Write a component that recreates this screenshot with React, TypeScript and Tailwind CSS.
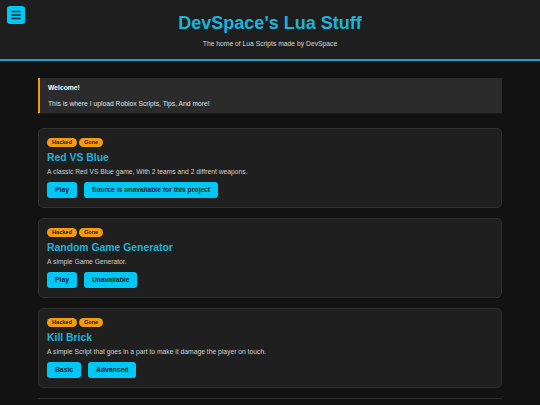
import { Menu } from 'lucide-react'

type Project = {
  title: string
  description: string
  tags: string[]
  actions: string[]
}

const projects: Project[] = [
  {
    title: 'Red VS Blue',
    description: 'A classic Red VS Blue game, With 2 teams and 2 diffrent weapons.',
    tags: ['Hacked', 'Gone'],
    actions: ['Play', 'Source is unavailable for this project'],
  },
  {
    title: 'Random Game Generator',
    description: 'A simple Game Generator.',
    tags: ['Hacked', 'Gone'],
    actions: ['Play', 'Unavaliable'],
  },
  {
    title: 'Kill Brick',
    description: 'A simple Script that goes in a part to make it damage the player on touch.',
    tags: ['Hacked', 'Gone'],
    actions: ['Basic', 'Advanced'],
  },
]

function ProjectCard({ project }: { project: Project }) {
  return (
    <div className="rounded-[5px] border border-[#2f2f2f] bg-[#1f1f1f] px-[8px] pt-[9px] pb-[9px]">
      {/* Status tags */}
      <div className="flex gap-[2px]">
        {project.tags.map((tag) => (
          <span
            key={tag}
            className="h-[9px] rounded-full bg-[#f39c0c] px-[5px] text-[5.6px] font-bold leading-[9px] text-[#1a1a1a]"
          >
            {tag}
          </span>
        ))}
      </div>

      <h3 className="mt-[4px] text-[10.4px] font-bold leading-[14px] text-[#1db4dc]">
        {project.title}
      </h3>
      <p className="mt-[2px] text-[6.75px] leading-[10px] text-[#d0d0d0]">
        {project.description}
      </p>

      <div className="mt-[5px] flex gap-[7px]">
        {project.actions.map((label) => (
          <button
            key={label}
            className="h-[16px] rounded-[3px] bg-[#00c8f5] px-[8px] text-[6.75px] font-bold text-[#112229]"
          >
            {label}
          </button>
        ))}
      </div>
    </div>
  )
}

export default function App() {
  return (
    <div className="relative min-h-[405px] bg-[#121212] font-['Liberation_Sans',Arial,sans-serif]">
      {/* Menu toggle */}
      <button className="absolute left-[7px] top-[6px] flex h-[18px] w-[18px] items-center justify-center rounded-[3px] bg-[#00c8f5]">
        <Menu size={12} strokeWidth={3} color="#0e2a33" />
      </button>

      <header className="flex h-[61px] flex-col items-center border-b-2 border-[#1ba6c6] bg-[#1e1e1e] pt-[12px]">
        <h1 className="text-[18px] font-bold leading-[22px] text-[#1db4dc]">
          DevSpace's Lua Stuff
        </h1>
        <p className="mt-[5px] text-[6.75px] leading-[10px] text-[#d8d8d8]">
          The home of Lua Scripts made by DevSpace
        </p>
      </header>

      <main className="mx-auto w-[464px] pt-[17px]">
        {/* Welcome notice */}
        <div className="h-[35px] border-l-2 border-[#f39c0c] bg-[#2b2b2b] px-[8px] pt-[5px] shadow-[0_1px_0_#1c1c1c]">
          <p className="text-[6.75px] font-bold leading-[10px] text-white">Welcome!</p>
          <p className="mt-[6px] text-[6.75px] leading-[10px] text-[#e0e0e0]">
            This is where I upload Roblox Scripts, Tips, And more!
          </p>
        </div>

        <div className="mt-[15px] flex flex-col gap-[10px]">
          {projects.map((p) => (
            <ProjectCard key={p.title} project={p} />
          ))}
        </div>

        <hr className="mt-[10px] border-t border-[#2c2c2c]" />
      </main>
    </div>
  )
}
